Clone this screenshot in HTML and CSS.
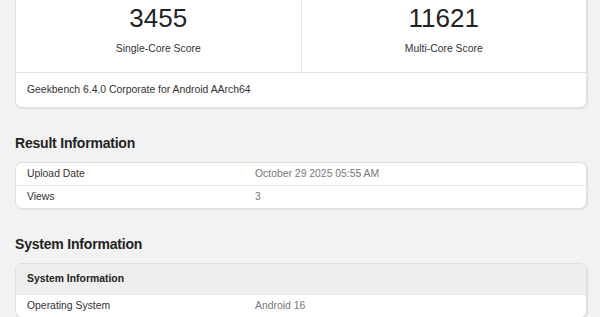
FILE: index.html
```html
<!DOCTYPE html>
<html lang="en">
<head>
    <meta charset="UTF-8">
    <meta name="viewport" content="width=device-width, initial-scale=1.0">
    <title>Geekbench Result</title>
    <link rel="stylesheet" href="styles.css">
</head>
<body>
    <div class="container">
        <div class="card score-card">
            <div class="scores">
                <div class="score">
                    <div class="score-value">3455</div>
                    <div class="score-label">Single-Core Score</div>
                </div>
                <div class="score">
                    <div class="score-value">11621</div>
                    <div class="score-label">Multi-Core Score</div>
                </div>
            </div>
            <div class="version">Geekbench 6.4.0 Corporate for Android AArch64</div>
        </div>

        <h2>Result Information</h2>
        <div class="card">
            <div class="row">
                <div class="name">Upload Date</div>
                <div class="value">October 29 2025 05:55 AM</div>
            </div>
            <div class="row">
                <div class="name">Views</div>
                <div class="value">3</div>
            </div>
        </div>

        <h2>System Information</h2>
        <div class="card">
            <div class="row head">System Information</div>
            <div class="row">
                <div class="name">Operating System</div>
                <div class="value">Android 16</div>
            </div>
        </div>
    </div>
</body>
</html>
```

FILE: styles.css
```css
/* Base styles */
body {
    margin: 0;
    background: #f2f2f2;
    font-family: 'Liberation Sans', Arial, sans-serif;
    font-size: 10.4px;
    line-height: 14px;
    color: #333;
    overflow: hidden;
}

.container {
    width: 572px;
    margin: -10px 0 0 15px;
}

.card {
    background: #fff;
    border: 1px solid #dedede;
    border-radius: 7px;
    box-shadow: 1px 1px 2px rgba(0,0,0,0.08);
    overflow: hidden;
}

/* Score card */
.scores {
    display: flex;
    border-bottom: 1px solid #e3e3e3;
}

.score {
    flex: 1;
    text-align: center;
    padding: 12px 0 16px;
}

.score + .score {
    border-left: 1px solid #e3e3e3;
}

.score-value {
    font-size: 26px;
    line-height: 30px;
    color: #222;
    margin-bottom: 9px;
}

.score-label {
    color: #333;
}

.version {
    padding: 10px 11px;
}

/* Section headings */
h2 {
    font-size: 14px;
    line-height: 18px;
    font-weight: bold;
    letter-spacing: -0.2px;
    color: #222;
    margin: 26px 0 10px;
}

/* Info rows */
.row {
    display: flex;
    padding: 4px 11px;
    border-top: 1px solid #e8e8e8;
}

.row:first-child {
    border-top: none;
}

.name {
    width: 228px;
    color: #333;
}

.value {
    color: #777;
}

.row.head {
    background: #eeeeee;
    font-weight: bold;
    color: #222;
    padding: 8px 11px;
}
```
